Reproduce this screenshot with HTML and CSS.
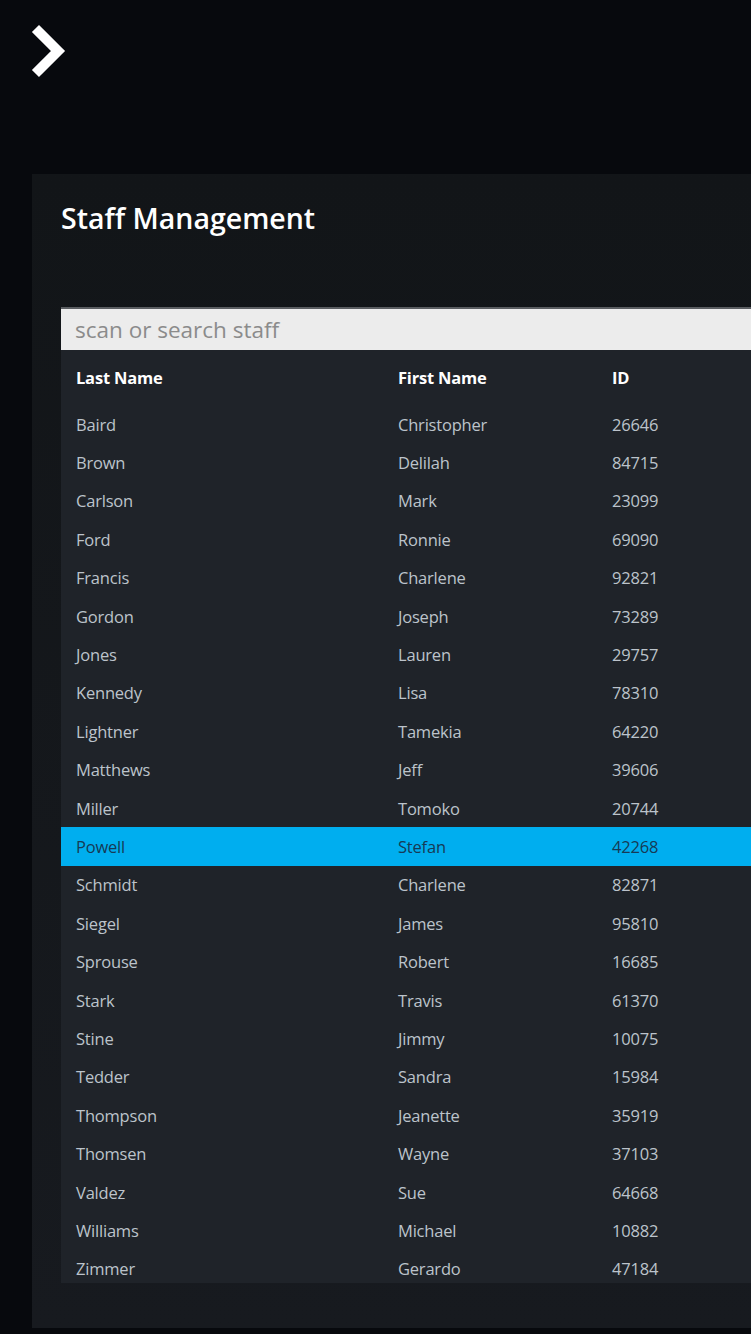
FILE: index.html
```html
<!DOCTYPE html>
<html lang="en">
<head>
    <meta charset="UTF-8">
    <title>Staff Management</title>
    <link rel="stylesheet" href="styles.css">
</head>
<body>
    <header class="topbar">
        <svg class="back-icon" width="40" height="56" viewBox="0 0 40 56">
            <polyline points="8,9 27,28 8,47" fill="none" stroke="#ffffff" stroke-width="10" stroke-linejoin="miter" stroke-linecap="square"/>
        </svg>
    </header>

    <main class="panel">
        <h1 class="title">Staff Management</h1>
        <input class="search" type="text" placeholder="scan or search staff">

        <div class="table">
            <div class="row head">
                <span>Last Name</span><span>First Name</span><span>ID</span>
            </div>
            <div class="row"><span>Baird</span><span>Christopher</span><span>26646</span></div>
            <div class="row"><span>Brown</span><span>Delilah</span><span>84715</span></div>
            <div class="row"><span>Carlson</span><span>Mark</span><span>23099</span></div>
            <div class="row"><span>Ford</span><span>Ronnie</span><span>69090</span></div>
            <div class="row"><span>Francis</span><span>Charlene</span><span>92821</span></div>
            <div class="row"><span>Gordon</span><span>Joseph</span><span>73289</span></div>
            <div class="row"><span>Jones</span><span>Lauren</span><span>29757</span></div>
            <div class="row"><span>Kennedy</span><span>Lisa</span><span>78310</span></div>
            <div class="row"><span>Lightner</span><span>Tamekia</span><span>64220</span></div>
            <div class="row"><span>Matthews</span><span>Jeff</span><span>39606</span></div>
            <div class="row"><span>Miller</span><span>Tomoko</span><span>20744</span></div>
            <div class="row selected"><span>Powell</span><span>Stefan</span><span>42268</span></div>
            <div class="row"><span>Schmidt</span><span>Charlene</span><span>82871</span></div>
            <div class="row"><span>Siegel</span><span>James</span><span>95810</span></div>
            <div class="row"><span>Sprouse</span><span>Robert</span><span>16685</span></div>
            <div class="row"><span>Stark</span><span>Travis</span><span>61370</span></div>
            <div class="row"><span>Stine</span><span>Jimmy</span><span>10075</span></div>
            <div class="row"><span>Tedder</span><span>Sandra</span><span>15984</span></div>
            <div class="row"><span>Thompson</span><span>Jeanette</span><span>35919</span></div>
            <div class="row"><span>Thomsen</span><span>Wayne</span><span>37103</span></div>
            <div class="row"><span>Valdez</span><span>Sue</span><span>64668</span></div>
            <div class="row"><span>Williams</span><span>Michael</span><span>10882</span></div>
            <div class="row"><span>Zimmer</span><span>Gerardo</span><span>47184</span></div>
        </div>
    </main>
</body>
</html>
```

FILE: styles.css
```css
html, body {
    margin: 0;
    padding: 0;
}

body {
    background-color: #07090d;
    font-family: "Open Sans", "Noto Sans", sans-serif;
    width: 751px;
    height: 1334px;
    overflow: hidden;
}

.topbar {
    height: 174px;
    box-sizing: border-box;
    padding: 23px 0 0 31px;
}

.back-icon {
    display: block;
}

.panel {
    margin-left: 32px;
    height: 1154px;
    background: linear-gradient(180deg, #121518 0%, #171a1f 100%);
    padding: 25px 0 0 29px;
    box-sizing: border-box;
}

.title {
    margin: 0;
    color: #ffffff;
    font-size: 28.5px;
    font-weight: 600;
    line-height: 38px;
    height: 108px;
}

.search {
    display: block;
    width: 100%;
    height: 43px;
    box-sizing: border-box;
    margin: 0;
    border: none;
    border-top: 2px solid #5a5d61;
    background-color: #ececec;
    padding: 0 14px;
    font-family: inherit;
    font-size: 22.5px;
    color: #333;
    outline: none;
}

.search::placeholder {
    color: #8b8b8b;
}

.table {
    background-color: #1f2329;
    height: 933px;
    overflow: hidden;
}

.row {
    display: grid;
    grid-template-columns: 322px 214px 1fr;
    height: 38.4px;
    align-items: center;
    padding-left: 15px;
    font-size: 16.5px;
    color: #bcc3cb;
    letter-spacing: -0.2px;
}

.row span {
    white-space: nowrap;
}

.row.head {
    height: 55px;
    color: #ffffff;
    font-weight: 700;
}

.row.selected {
    background-color: #00aeef;
    color: #173a55;
}
```
